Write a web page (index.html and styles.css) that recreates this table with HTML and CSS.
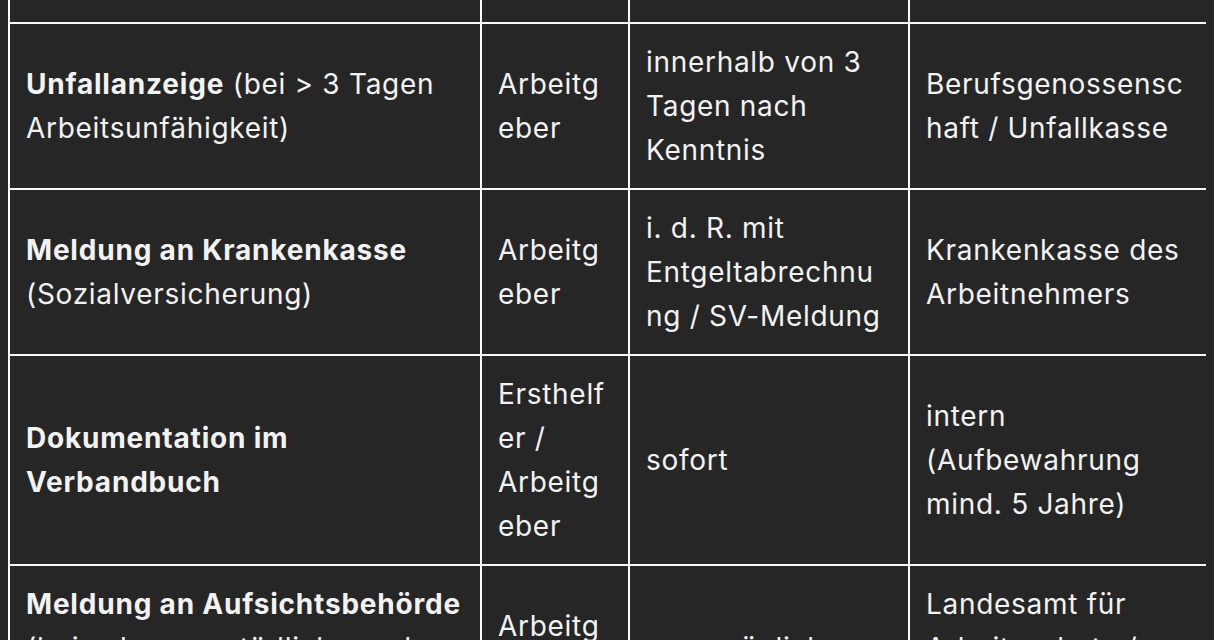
FILE: index.html
```html
<!DOCTYPE html>
<html lang="de">
<head>
<meta charset="utf-8">
<title>Meldepflichten</title>
<link rel="stylesheet" href="styles.css">
</head>
<body>
<div class="table">
  <div class="row cut">
    <div class="cell"></div>
    <div class="cell"></div>
    <div class="cell"></div>
    <div class="cell"></div>
  </div>
  <div class="row">
    <div class="cell"><div class="txt"><strong>Unfallanzeige</strong> (bei &gt; 3 Tagen Arbeitsunfähigkeit)</div></div>
    <div class="cell"><div class="txt">Arbeitgeber</div></div>
    <div class="cell c3"><div class="txt">innerhalb von 3 Tagen nach Kenntnis</div></div>
    <div class="cell"><div class="txt">Berufsgenossenschaft / Unfallkasse</div></div>
  </div>
  <div class="row">
    <div class="cell"><div class="txt"><strong>Meldung an Krankenkasse</strong> (Sozialversicherung)</div></div>
    <div class="cell"><div class="txt">Arbeitgeber</div></div>
    <div class="cell c3"><div class="txt">i. d. R. mit Entgeltabrechnung / SV-Meldung</div></div>
    <div class="cell"><div class="txt">Krankenkasse des Arbeitnehmers</div></div>
  </div>
  <div class="row">
    <div class="cell"><div class="txt"><strong>Dokumentation im Verbandbuch</strong></div></div>
    <div class="cell"><div class="txt">Ersthelfer / Arbeitgeber</div></div>
    <div class="cell c3"><div class="txt">sofort</div></div>
    <div class="cell"><div class="txt">intern (Aufbewahrung mind. 5 Jahre)</div></div>
  </div>
  <div class="row">
    <div class="cell"><div class="txt"><strong>Meldung an Aufsichtsbehörde</strong> (bei schweren, tödlichen oder Massenunfällen)</div></div>
    <div class="cell"><div class="txt">Arbeitgeber</div></div>
    <div class="cell c3"><div class="txt">unverzüglich</div></div>
    <div class="cell"><div class="txt">Landesamt für Arbeitsschutz / Gewerbeaufsicht</div></div>
  </div>
</div>
</body>
</html>
```
FILE: styles.css
```css
html, body {
  overflow: hidden;
}
body {
  margin: 0 8px;
  background: #262626;
  color: #f2f2f2;
  font-family: Inter, "Liberation Sans", sans-serif;
  font-size: 28px;
  line-height: 44px;
  letter-spacing: 0.7px;
}
.table {
  width: 1200px;
}
.row {
  display: grid;
  grid-template-columns: 472px 148px 280px 300px;
}
.cell {
  border-left: 2px solid #fafafa;
  border-top: 2px solid #fafafa;
  padding: 16px;
  display: flex;
  align-items: center;
}
.cell:last-child {
  border-right: 2px solid #fafafa;
}
.c3 {
  padding-right: 18px;
}
.cut .cell {
  border-top: none;
  height: 22px;
  padding: 0;
}
.txt {
  min-width: 0;
  overflow-wrap: anywhere;
}
.txt strong {
  font-weight: 700;
  letter-spacing: 0.8px;
}
```
